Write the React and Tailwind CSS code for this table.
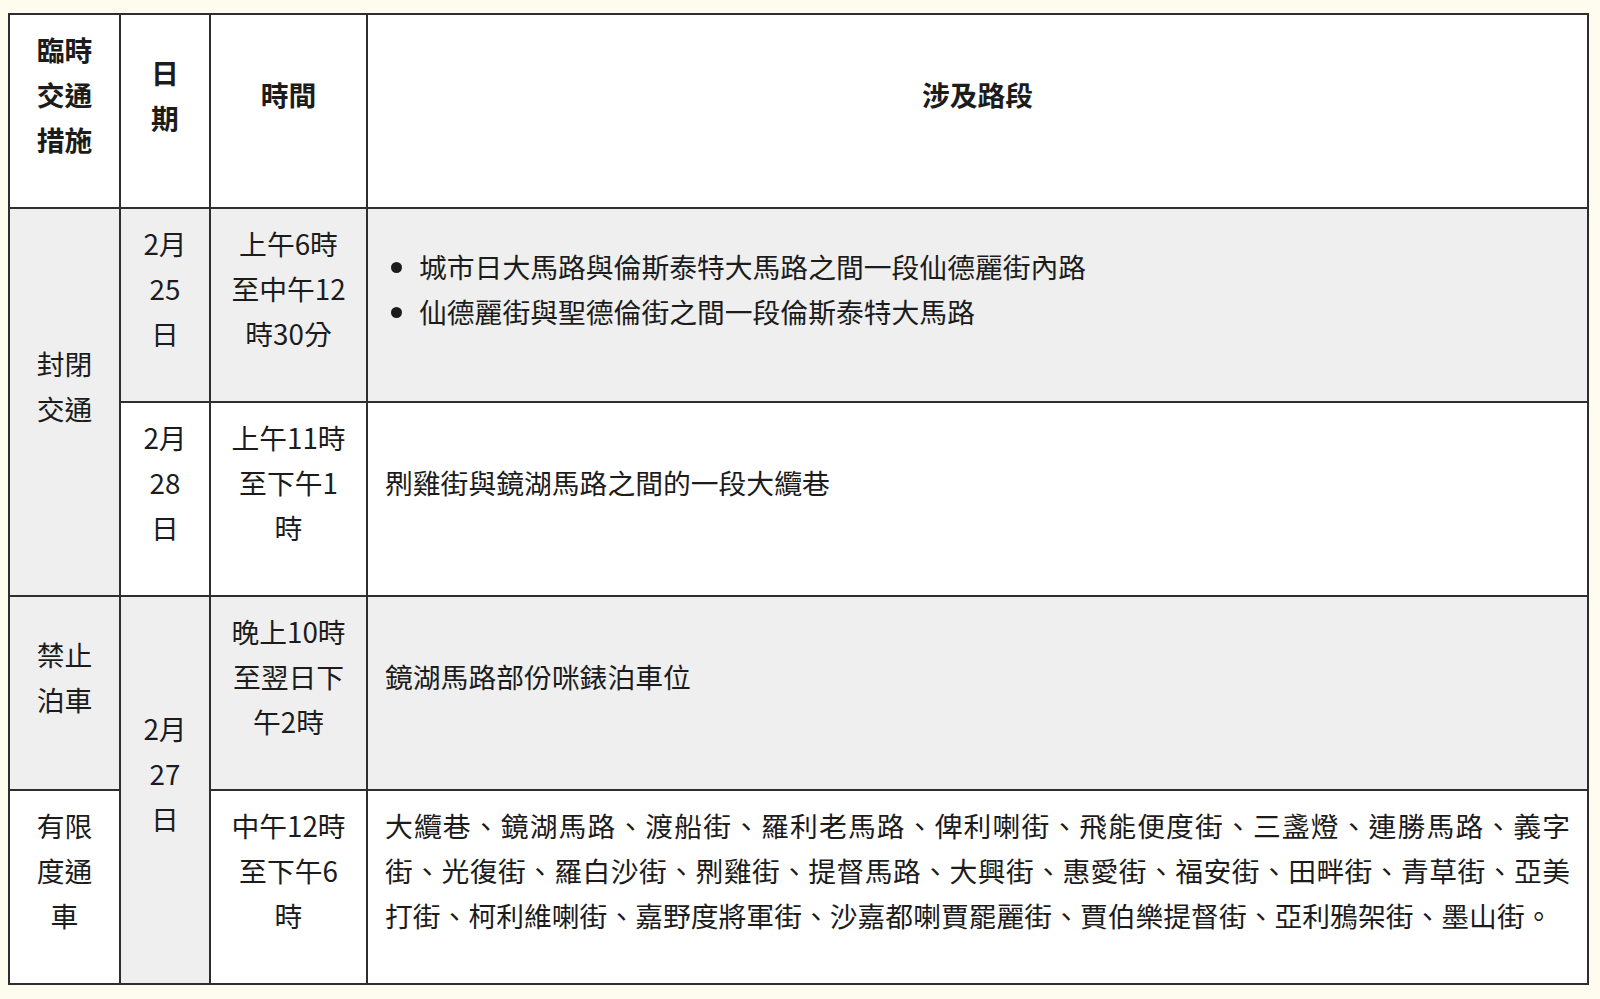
import React from 'react';

const cell = "border-2 border-[#2e2e2e] pt-[12px] pb-[45px] align-middle";

const Lines = ({ lines }) => (
  <>
    {lines.map((l, i) => (
      <div key={i}>{l}</div>
    ))}
  </>
);

const App = () => {
  return (
    <div
      className="min-h-[999px] w-full bg-[#fdfcef] pl-[8px] pr-[11px] pt-[13px] text-[#1c1c1c] text-[27.8px] leading-[45px]"
      style={{ fontFamily: '"Noto Sans CJK TC", "Noto Sans", sans-serif' }}
    >
      <table className="w-full table-fixed border-collapse bg-white">
        <colgroup>
          <col className="w-[111px]" />
          <col className="w-[90px]" />
          <col className="w-[157px]" />
          <col />
        </colgroup>
        <thead>
          <tr className="bg-white font-bold">
            <th className={`${cell} px-[6px] text-center font-bold`}>
              <Lines lines={['臨時', '交通', '措施']} />
            </th>
            <th className={`${cell} px-[6px] text-center font-bold`}>
              <Lines lines={['日', '期']} />
            </th>
            <th className={`${cell} px-[6px] text-center font-bold`}>時間</th>
            <th className={`${cell} px-[17px] text-center font-bold`}>涉及路段</th>
          </tr>
        </thead>
        <tbody>
          <tr className="bg-[#efefef]">
            <td rowSpan={2} className={`${cell} px-[6px] text-center`}>
              <Lines lines={['封閉', '交通']} />
            </td>
            <td className={`${cell} px-[6px] text-center`}>
              <Lines lines={['2月', '25', '日']} />
            </td>
            <td className={`${cell} px-[4px] text-center`}>
              <Lines lines={['上午6時', '至中午12', '時30分']} />
            </td>
            <td className={`${cell} px-[17px] text-left`}>
              <ul className="list-disc pl-[34px]">
                <li>城市日大馬路與倫斯泰特大馬路之間一段仙德麗街內路</li>
                <li>仙德麗街與聖德倫街之間一段倫斯泰特大馬路</li>
              </ul>
            </td>
          </tr>
          <tr className="bg-white">
            <td className={`${cell} px-[6px] text-center`}>
              <Lines lines={['2月', '28', '日']} />
            </td>
            <td className={`${cell} px-[4px] text-center`}>
              <Lines lines={['上午11時', '至下午1', '時']} />
            </td>
            <td className={`${cell} px-[17px] text-left`}>𠝹雞街與鏡湖馬路之間的一段大纜巷</td>
          </tr>
          <tr className="bg-[#efefef]">
            <td className={`${cell} px-[6px] text-center`}>
              <Lines lines={['禁止', '泊車']} />
            </td>
            <td rowSpan={2} className={`${cell} px-[6px] text-center`}>
              <Lines lines={['2月', '27', '日']} />
            </td>
            <td className={`${cell} px-[4px] text-center`}>
              <Lines lines={['晚上10時', '至翌日下', '午2時']} />
            </td>
            <td className={`${cell} px-[17px] text-left`}>鏡湖馬路部份咪錶泊車位</td>
          </tr>
          <tr className="bg-white">
            <td className={`${cell} px-[6px] text-center`}>
              <Lines lines={['有限', '度通', '車']} />
            </td>
            <td className={`${cell} px-[4px] text-center`}>
              <Lines lines={['中午12時', '至下午6', '時']} />
            </td>
            <td className={`${cell} px-[17px] text-left`}>
              <div className="whitespace-nowrap text-justify [text-align-last:justify]">
                大纜巷、鏡湖馬路、渡船街、羅利老馬路、俾利喇街、飛能便度街、三盞燈、連勝馬路、義字
              </div>
              <div className="whitespace-nowrap text-justify [text-align-last:justify]">
                街、光復街、羅白沙街、𠝹雞街、提督馬路、大興街、惠愛街、福安街、田畔街、青草街、亞美
              </div>
              <div className="whitespace-nowrap">
                打街、柯利維喇街、嘉野度將軍街、沙嘉都喇賈罷麗街、賈伯樂提督街、亞利鴉架街、墨山街。
              </div>
            </td>
          </tr>
        </tbody>
      </table>
    </div>
  );
};

export default App;
